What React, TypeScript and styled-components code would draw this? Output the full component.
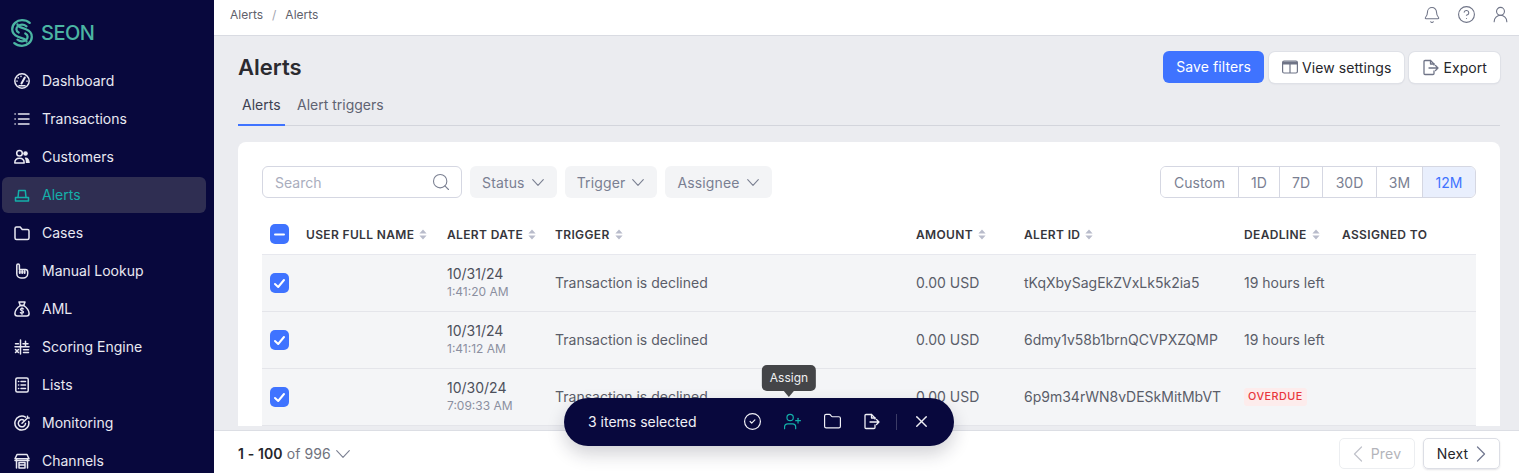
import styled, { createGlobalStyle } from "styled-components";
import { Bell, CircleCheck, CircleHelp, Folder, Search, UserPlus, UserRound, X } from "lucide-react";

const GlobalStyle = createGlobalStyle`
  html, body { margin: 0; padding: 0; height: 100%; }
  body { font-family: Inter, "Liberation Sans", sans-serif; color: #26262b; overflow: hidden; }
  #root { height: 100%; }
  * { box-sizing: border-box; }
`;

const Shell = styled.div`
  display: flex;
  height: 473px;
  overflow: hidden;
`;

const Sidebar = styled.aside`
  width: 214px;
  flex: none;
  background: #08083d;
  overflow: hidden;
`;

const Brand = styled.div`
  display: flex;
  align-items: center;
  gap: 8px;
  height: 63px;
  padding: 3px 0 0 11px;
  color: #4bb5a3;
  font-size: 20px;
  font-weight: 500;
  letter-spacing: -0.5px;
`;

const NavList = styled.nav`
  display: flex;
  flex-direction: column;
  gap: 2px;
`;

const NavItem = styled.div<{ $active?: boolean }>`
  display: flex;
  align-items: center;
  gap: 12px;
  height: 36px;
  margin: 0 8px 0 2px;
  padding: 0 0 1px 12px;
  border-radius: 6px;
  font-size: 14px;
  background: ${({ $active }) => ($active ? "#2f2e52" : "transparent")};
  color: ${({ $active }) => ($active ? "#14b0aa" : "#e9e9f2")};
  flex: none;
  svg { flex: none; }
`;

const Main = styled.div`
  flex: 1;
  min-width: 0;
  display: flex;
  flex-direction: column;
  position: relative;
  background: #ebecf0;
`;

const TopBar = styled.header`
  height: 36px;
  flex: none;
  display: flex;
  align-items: center;
  justify-content: space-between;
  padding: 0 9px 0 16px;
  background: #fff;
  border-bottom: 1px solid #d9dbe2;
`;

const Crumbs = styled.div`
  display: flex;
  gap: 9px;
  margin-top: -6px;
  font-size: 12px;
  color: #5f616b;
  span:nth-child(2) { color: #a2a4af; }
`;

const TopIcons = styled.div`
  display: flex;
  align-items: center;
  gap: 15.5px;
  color: #6f7487;
  margin-top: -6px;
`;

const Content = styled.main`
  flex: 1;
  min-height: 0;
  overflow: hidden;
  padding: 15px 19px 0 24px;
`;

const TitleRow = styled.div`
  display: flex;
  justify-content: space-between;
  align-items: flex-start;
  height: 38px;
`;

const Title = styled.h1`
  margin: 0;
  padding-top: 2px;
  font-size: 22px;
  line-height: 28px;
  font-weight: 600;
  color: #2b2b30;
`;

const Actions = styled.div`
  display: flex;
  gap: 5px;
`;

const ActionButton = styled.button<{ $primary?: boolean }>`
  display: flex;
  align-items: center;
  gap: 4px;
  height: ${({ $primary }) => ($primary ? "32px" : "31px")};
  margin-top: ${({ $primary }) => ($primary ? "0" : "1px")};
  padding: 0 13px 1px;
  border: 0;
  border-radius: 6px;
  font: 400 14px Inter, sans-serif;
  letter-spacing: 0.08px;
  background: ${({ $primary }) => ($primary ? "#3f73ff" : "#fff")};
  color: ${({ $primary }) => ($primary ? "#fff" : "#26262b")};
  box-shadow: ${({ $primary }) => ($primary ? "none" : "0 0 0 1px #dfe1e7, 0 1px 2px rgba(30,30,60,.1)")};
`;

const Tabs = styled.div`
  display: flex;
  gap: 8px;
  height: 37px;
  border-bottom: 1px solid #d3d5dc;
`;

const Tab = styled.div<{ $active?: boolean }>`
  padding: 6px 4px 0;
  width: ${({ $active }) => ($active ? "47px" : "auto")};
  font-size: 14px;
  line-height: 20px;
  color: ${({ $active }) => ($active ? "#3d4150" : "#5f6372")};
  border-bottom: ${({ $active }) => ($active ? "2px solid #3f73ff" : "0")};
  height: 37px;
`;

const Card = styled.section`
  margin-top: 16px;
  padding: 24px 24px 0;
  background: #fff;
  border-radius: 8px 8px 0 0;
`;

const Filters = styled.div`
  display: flex;
  align-items: center;
  gap: 8px;
  height: 32px;
`;

const SearchBox = styled.div`
  display: flex;
  align-items: center;
  justify-content: space-between;
  width: 200px;
  height: 32px;
  padding: 0 10px 0 12px;
  border: 1px solid #d5d7e2;
  border-radius: 6px;
  font-size: 14px;
  color: #a9adbd;
  svg { color: #7b8092; }
`;

const FilterChip = styled.div`
  display: flex;
  align-items: center;
  gap: 7px;
  height: 32px;
  padding: 0 13px 0 12px;
  border-radius: 6px;
  background: #f3f4f6;
  color: #7a7f92;
  font-size: 14px;
  letter-spacing: 0.15px;
`;

const RangeGroup = styled.div`
  display: flex;
  margin-left: auto;
  height: 32px;
  border: 1px solid #d5d7e2;
  border-radius: 6px;
  overflow: hidden;
`;

const RangeItem = styled.div<{ $active?: boolean; $width: number }>`
  display: flex;
  align-items: center;
  justify-content: center;
  width: ${({ $width }) => $width}px;
  font-size: 14px;
  color: ${({ $active }) => ($active ? "#3f73ff" : "#7a7f92")};
  background: ${({ $active }) => ($active ? "#e9effd" : "#fff")};
  & + & { border-left: 1px solid #d5d7e2; }
`;

const columns = "36px 141px 108px 361px 108px 220px 98px 1fr";

const HeadRow = styled.div`
  display: grid;
  grid-template-columns: ${columns};
  align-items: center;
  height: 41px;
  margin-top: 16px;
  padding-left: 8px;
  border-bottom: 1px solid #e7e8ee;
`;

const HeadCell = styled.div`
  display: flex;
  align-items: center;
  gap: 5px;
  font-size: 12px;
  font-weight: 600;
  letter-spacing: 0.35px;
  color: #36363c;
  white-space: nowrap;
`;

const Row = styled.div`
  display: grid;
  grid-template-columns: ${columns};
  align-items: center;
  height: 57px;
  padding: 0 0 2px 8px;
  background: #f4f5f7;
  border-bottom: 1px solid #e4e5ea;
  font-size: 14px;
  color: #5a5d69;
`;

const CheckBox = styled.div`
  display: flex;
  align-items: center;
  justify-content: center;
  width: 19px;
  height: 20px;
  border-radius: 5px;
  background: #3f73ff;
`;

const RowCheckBox = styled(CheckBox)`
  margin-top: 2px;
`;

const DateCell = styled.div`
  display: flex;
  flex-direction: column;
  gap: 2px;
  line-height: 17px;
  color: #4d505b;
  small {
    font-size: 12px;
    line-height: 15px;
    color: #8b8f9f;
  }
`;

const OverdueTag = styled.span`
  display: inline-block;
  margin-top: 2px;
  padding: 0 4px;
  height: 18px;
  line-height: 18px;
  border-radius: 3px;
  background: #fdecec;
  color: #e8363c;
  font-size: 10.8px;
  font-weight: 500;
  letter-spacing: 0.5px;
`;

const Footer = styled.footer`
  height: 43px;
  flex: none;
  display: flex;
  align-items: center;
  justify-content: space-between;
  padding: 3px 19px 0 24px;
  background: #fff;
  border-top: 1px solid #dcdee4;
  position: relative;
`;

const PageInfo = styled.div`
  display: flex;
  align-items: center;
  gap: 5px;
  font-size: 14px;
  letter-spacing: 0.1px;
  color: #70727d;
  b { font-weight: 600; color: #26262b; }
`;

const Pager = styled.div`
  display: flex;
  gap: 8px;
`;

const PageButton = styled.div<{ $disabled?: boolean }>`
  display: flex;
  align-items: center;
  justify-content: center;
  gap: 8px;
  width: ${({ $disabled }) => ($disabled ? "76px" : "77px")};
  height: 31px;
  border-radius: 5px;
  font-size: 14px;
  color: ${({ $disabled }) => ($disabled ? "#b3b4ba" : "#26262b")};
  border: 1px solid ${({ $disabled }) => ($disabled ? "#eceef1" : "#dcdee5")};
  box-shadow: ${({ $disabled }) => ($disabled ? "none" : "0 1px 2px rgba(30,30,60,.12)")};
  letter-spacing: 0.2px;
  svg { color: ${({ $disabled }) => ($disabled ? "#c2c4cc" : "#747a92")}; }
`;

const SelectionBar = styled.div`
  position: absolute;
  left: 350px;
  top: 398px;
  width: 390px;
  height: 48px;
  display: flex;
  align-items: center;
  padding: 0 0 1px 24px;
  border-radius: 24px;
  background: #08083d;
  color: #f0f0f6;
  font-size: 14px;
  box-shadow: 0 8px 18px rgba(30, 30, 50, 0.2);
`;

const BarActions = styled.div`
  display: flex;
  align-items: center;
  gap: 21px;
  margin-left: 47px;
`;

const BarDivider = styled.div`
  width: 1px;
  height: 16px;
  margin: 0 -5.5px;
  background: #3c3c66;
`;

const AssignSlot = styled.div`
  position: relative;
  display: flex;
  color: #14b0aa;
`;

const Tooltip = styled.div`
  position: absolute;
  left: calc(50% - 4px);
  bottom: calc(100% + 21px);
  transform: translateX(-50%);
  padding: 0 8px;
  height: 26px;
  line-height: 26px;
  border-radius: 5px;
  background: #444548;
  color: #f1f1f3;
  font-size: 12px;
  &::after {
    content: "";
    position: absolute;
    left: 50%;
    bottom: -6px;
    margin-left: -5px;
    border-left: 5px solid transparent;
    border-right: 5px solid transparent;
    border-top: 6px solid #444548;
  }
`;

const SortIcon = () => (
  <svg width="8" height="11" viewBox="0 0 8 11" fill="#b9bccb">
    <path d="M4 0.5 7.600 4.600H.4zM4 10.500.4 6.400h7.200z" />
  </svg>
);

const CheckMark = () => (
  <svg width="13" height="13" viewBox="0 0 13 13" fill="none" stroke="#fff" strokeWidth="2" strokeLinecap="round" strokeLinejoin="round">
    <path d="M2 7l3.200 3L11 3" />
  </svg>
);

const ChevronDownThin = ({ width = 12, height = 7 }: { width?: number; height?: number }) => (
  <svg width={width} height={height} viewBox={`0 0 ${width} ${height}`} fill="none" stroke="#7b8092" strokeWidth="1.100" strokeLinecap="round" strokeLinejoin="round">
    <path d={`M.7.7 ${width / 2} ${height - 0.7} ${width - 0.7}.7`} />
  </svg>
);

const ChevronSide = ({ left }: { left?: boolean }) => (
  <svg width="10" height="16" viewBox="0 0 10 16" fill="none" stroke="currentColor" strokeWidth="1.300" strokeLinecap="round" strokeLinejoin="round">
    <path d={left ? "M8.500 1 1.500 8l7 7" : "M1.500 1l7 7-7 7"} />
  </svg>
);

const logoStroke = "M18.700 3.900C16.800 2.200 14.100 1.200 11 1.200 5.600 1.200 1.200 5.200 1.200 10.300c0 3.800 2.300 6 5.800 7.400l5.800 2.200c1.700.7 2.700 1.500 2.700 2.700";

const Logo = () => (
  <svg width="22" height="28" viewBox="0 0 22 28" fill="none" stroke="#4bb5a3" strokeWidth="2.300" strokeLinecap="round">
    <path d={logoStroke} />
    <path d={logoStroke} transform="rotate(180 11 14)" />
    <path d="M15.500 7.300C14.300 6.300 12.800 5.700 11 5.700 8 5.700 5.400 7.700 5.400 10.300c0 1.500.9 2.500 2.300 3.200" />
    <path d="M6.500 20.700c1.200 1 2.700 1.600 4.500 1.600 3 0 5.600-2 5.600-4.600 0-1.500-.9-2.500-2.300-3.200" />
  </svg>
);

const Glyph = ({ children }: { children: React.ReactNode }) => (
  <svg width="16" height="16" viewBox="0 0 16 16" fill="none" stroke="currentColor" strokeWidth="1.500" strokeLinecap="round" strokeLinejoin="round">
    {children}
  </svg>
);

const DashboardIcon = () => (
  <Glyph>
    <circle cx="8" cy="8" r="7.200" />
    <path d="M7.500 10.500 10.800 4.500" strokeWidth="2" />
    <path d="M7 3.200v.2M4.200 4.800v.2M3 8v.2M13 8v.2M5 12.800h6" />
  </Glyph>
);

const TransactionsIcon = () => (
  <Glyph>
    <path d="M1 3h.2M1 8h.2M1 13h.2M4.500 3H15M4.500 8H15M4.500 13H15" />
  </Glyph>
);

const CustomersIcon = () => (
  <Glyph>
    <circle cx="5.500" cy="4.300" r="2.800" />
    <path d="M.8 14c0-3.200 2-4.800 4.700-4.800s4.700 1.600 4.700 4.800z" />
    <circle cx="11.500" cy="4.500" r="2.300" fill="currentColor" stroke="none" />
    <path d="M11 8.500c2.500-.5 4.800 1.500 4.800 5.500h-4c.1-2.300-.3-4-1-5z" fill="currentColor" stroke="none" />
  </Glyph>
);

const AlertsIcon = () => (
  <Glyph>
    <path d="M4 10.500 4.700 3.500h6.600l.7 7" />
    <path d="M1.500 10.500h13v3.500h-13z" />
  </Glyph>
);

const CasesIcon = () => (
  <Glyph>
    <path d="M1 3.500A1.500 1.500 0 0 1 2.500 2h3.700l2 2.500h5.300A1.500 1.500 0 0 1 15 6v7a1.500 1.500 0 0 1-1.500 1.500h-11A1.500 1.500 0 0 1 1 13z" />
  </Glyph>
);

const LookupIcon = () => (
  <Glyph>
    <path d="M2.800 8.500V2.300a1.300 1.300 0 0 1 2.600 0V6.500h6c1.300 0 2.300 1 2.300 2.300v1.700c0 2.500-2 4.500-4.500 4.500H7c-2.300 0-4.200-1.900-4.200-4.200z" />
    <path d="M5.800 8v2M8.200 8v2M10.600 8v2" strokeWidth="2" />
  </Glyph>
);

const AmlIcon = () => (
  <Glyph>
    <path d="M5 1h6L9.700 4.500H6.300z" />
    <path d="M6.300 4.500C3.500 6.500.9 9.700.9 12.500c0 1.500 1 2.500 2.500 2.500h9.200c1.500 0 2.500-1 2.500-2.500 0-2.800-2.600-6-5.400-8z" />
    <path d="M9.600 8c-.4-.5-1-.7-1.600-.7-.9 0-1.600.5-1.600 1.200 0 1.600 3.200.9 3.200 2.500 0 .7-.7 1.200-1.600 1.200-.7 0-1.200-.2-1.700-.7M8 6.500v7" strokeWidth="1.100" />
  </Glyph>
);

const ScoringIcon = () => (
  <Glyph>
    <path d="M6.500 1v14M1 7.800h14" />
    <path d="M1.500 4.800h3M9 4.800h5M11.500 2.300v5M1.500 10.500l3 3M4.500 10.500l-3 3M9.500 10.800h5M9.500 13.500h5" />
  </Glyph>
);

const ListsIcon = () => (
  <Glyph>
    <rect x="1.800" y="1" width="12.400" height="14" rx="1.500" />
    <path d="M4.500 4.500h.2M7 4.500h4.500M4.500 8h.2M7 8h4.500M4.500 11.500h.2M7 11.500h4.500" />
  </Glyph>
);

const MonitoringIcon = () => (
  <Glyph>
    <path d="M11.500 2.100A7 7 0 1 0 14.700 6.500" />
    <path d="M9.700 5.100A3.600 3.600 0 1 0 11.500 8.500" />
    <path d="M8 8.200 13.500 3M13.500 3V1.200M13.500 3h1.700" />
  </Glyph>
);

const ChannelsIcon = () => (
  <Glyph>
    <path d="M3 1.500h10l2 4.200H1z" />
    <path d="M2.500 6v9M13.500 6v9M1 7.500h14" />
    <path d="M5 9.500h6V15H5zM5 12h6" />
  </Glyph>
);

const TableIcon = () => (
  <svg width="16" height="14" viewBox="0 0 16 14">
    <rect x="0.600" y="1" width="14.800" height="12" rx="1.500" fill="none" stroke="#6f7487" strokeWidth="1.200" />
    <path d="M1 1.500h14v3H1z" fill="#6f7487" />
    <path d="M8 2v11" stroke="#6f7487" strokeWidth="1.200" />
  </svg>
);

const ExportIcon = ({ color = "#6f7487" }: { color?: string }) => (
  <svg width="17" height="17" viewBox="0 0 17 17" fill="none" stroke={color} strokeWidth="1.300" strokeLinecap="round" strokeLinejoin="round">
    <path d="M12 6V5L8.500 1.500H3a1 1 0 0 0-1 1v12a1 1 0 0 0 1 1h8a1 1 0 0 0 1-1V12" />
    <path d="M8.500 1.500V5H12M7 9h9M13.500 6.500 16 9l-2.500 2.500" />
  </svg>
);

const navItems = [
  { label: "Dashboard", icon: <DashboardIcon /> },
  { label: "Transactions", icon: <TransactionsIcon /> },
  { label: "Customers", icon: <CustomersIcon /> },
  { label: "Alerts", icon: <AlertsIcon />, active: true },
  { label: "Cases", icon: <CasesIcon /> },
  { label: "Manual Lookup", icon: <LookupIcon /> },
  { label: "AML", icon: <AmlIcon /> },
  { label: "Scoring Engine", icon: <ScoringIcon /> },
  { label: "Lists", icon: <ListsIcon /> },
  { label: "Monitoring", icon: <MonitoringIcon /> },
  { label: "Channels", icon: <ChannelsIcon /> },
];

const ranges = [
  { label: "Custom", width: 77 },
  { label: "1D", width: 41 },
  { label: "7D", width: 43 },
  { label: "30D", width: 54 },
  { label: "3M", width: 46 },
  { label: "12M", width: 53 },
];

const headers = ["USER FULL NAME", "ALERT DATE", "TRIGGER", "AMOUNT", "ALERT ID", "DEADLINE"];

const rows = [
  { date: "10/31/24", time: "1:41:20 AM", id: "tKqXbySagEkZVxLk5k2ia5", deadline: "19 hours left" },
  { date: "10/31/24", time: "1:41:12 AM", id: "6dmy1v58b1brnQCVPXZQMP", deadline: "19 hours left" },
  { date: "10/30/24", time: "7:09:33 AM", id: "6p9m34rWN8vDESkMitMbVT", deadline: "" },
];

export default function App() {
  return (
    <Shell>
      <GlobalStyle />
      <Sidebar>
        <Brand>
          <Logo />
          SEON
        </Brand>
        <NavList>
          {navItems.map((item) => (
            <NavItem key={item.label} $active={item.active}>
              {item.icon}
              {item.label}
            </NavItem>
          ))}
        </NavList>
      </Sidebar>
      <Main>
        <TopBar>
          <Crumbs>
            <span>Alerts</span>
            <span>/</span>
            <span>Alerts</span>
          </Crumbs>
          <TopIcons>
            <Bell size={18} strokeWidth={1.4} />
            <CircleHelp size={19} strokeWidth={1.4} />
            <UserRound size={19} strokeWidth={1.4} />
          </TopIcons>
        </TopBar>
        <Content>
          <TitleRow>
            <Title>Alerts</Title>
            <Actions>
              <ActionButton $primary>Save filters</ActionButton>
              <ActionButton>
                <TableIcon />
                View settings
              </ActionButton>
              <ActionButton>
                <ExportIcon />
                Export
              </ActionButton>
            </Actions>
          </TitleRow>
          <Tabs>
            <Tab $active>Alerts</Tab>
            <Tab>Alert triggers</Tab>
          </Tabs>
          <Card>
            <Filters>
              <SearchBox>
                Search
                <Search size={20} strokeWidth={1.3} />
              </SearchBox>
              {["Status", "Trigger", "Assignee"].map((name) => (
                <FilterChip key={name}>
                  {name}
                  <ChevronDownThin />
                </FilterChip>
              ))}
              <RangeGroup>
                {ranges.map((range) => (
                  <RangeItem key={range.label} $width={range.width} $active={range.label === "12M"}>
                    {range.label}
                  </RangeItem>
                ))}
              </RangeGroup>
            </Filters>
            <HeadRow>
              <CheckBox>
                <svg width="13" height="13" viewBox="0 0 13 13" stroke="#fff" strokeWidth="2" strokeLinecap="round">
                  <path d="M2 6.500h9" />
                </svg>
              </CheckBox>
              {headers.map((header) => (
                <HeadCell key={header}>
                  {header}
                  <SortIcon />
                </HeadCell>
              ))}
              <HeadCell>ASSIGNED TO</HeadCell>
            </HeadRow>
            {rows.map((row) => (
              <Row key={row.id}>
                <RowCheckBox>
                  <CheckMark />
                </RowCheckBox>
                <div />
                <DateCell>
                  {row.date}
                  <small>{row.time}</small>
                </DateCell>
                <div>Transaction is declined</div>
                <div>0.00 USD</div>
                <div>{row.id}</div>
                <div>{row.deadline || <OverdueTag>OVERDUE</OverdueTag>}</div>
                <div />
              </Row>
            ))}
          </Card>
        </Content>
        <Footer>
          <PageInfo>
            <span>
              <b>1 - 100</b> of 996
            </span>
            <ChevronDownThin width={14} height={8} />
          </PageInfo>
          <Pager>
            <PageButton $disabled>
              <ChevronSide left />
              Prev
            </PageButton>
            <PageButton>
              Next
              <ChevronSide />
            </PageButton>
          </Pager>
        </Footer>
        <SelectionBar>
          3 items selected
          <BarActions>
            <CircleCheck size={19} strokeWidth={1.5} />
            <AssignSlot>
              <UserPlus size={19} strokeWidth={1.5} />
              <Tooltip>Assign</Tooltip>
            </AssignSlot>
            <Folder size={19} strokeWidth={1.5} />
            <ExportIcon color="#f0f0f6" />
            <BarDivider />
            <X size={19} strokeWidth={1.7} />
          </BarActions>
        </SelectionBar>
      </Main>
    </Shell>
  );
}
